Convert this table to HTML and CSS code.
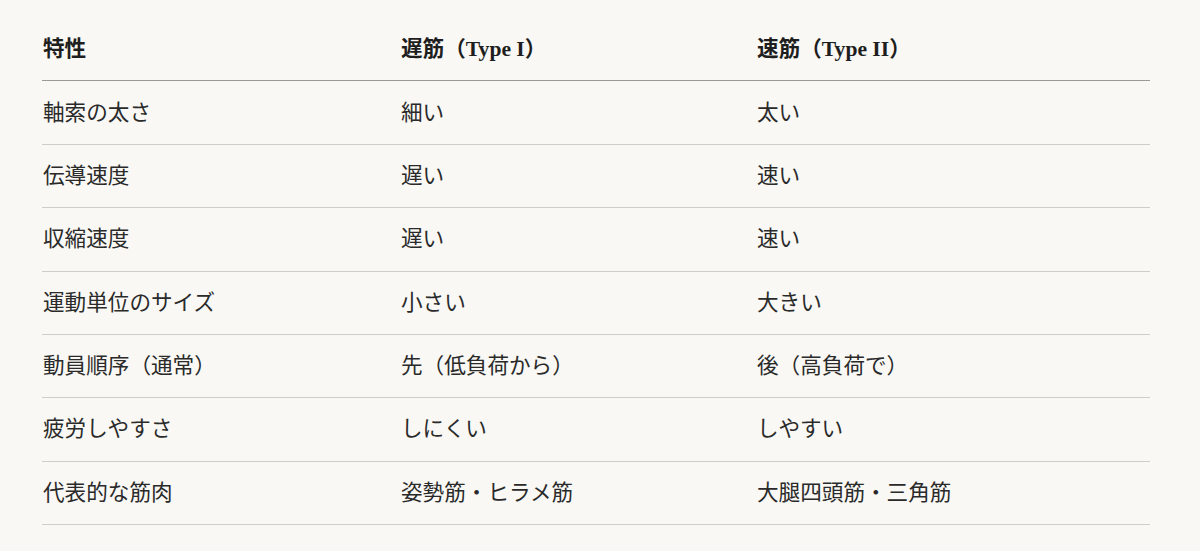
FILE: index.html
```html
<!DOCTYPE html>
<html lang="ja">
<head>
<meta charset="utf-8">
<link rel="stylesheet" href="styles.css">
</head>
<body>
<div class="wrap">
<table class="cmp">
<thead>
<tr><th class="c1">特性</th><th class="c2">遅筋（Type I）</th><th class="c3">速筋（Type II）</th></tr>
</thead>
<tbody>
<tr><td>軸索の太さ</td><td>細い</td><td>太い</td></tr>
<tr><td>伝導速度</td><td>遅い</td><td>速い</td></tr>
<tr><td>収縮速度</td><td>遅い</td><td>速い</td></tr>
<tr><td>運動単位のサイズ</td><td>小さい</td><td>大きい</td></tr>
<tr><td>動員順序（通常）</td><td>先（低負荷から）</td><td>後（高負荷で）</td></tr>
<tr><td>疲労しやすさ</td><td>しにくい</td><td>しやすい</td></tr>
<tr><td>代表的な筋肉</td><td>姿勢筋・ヒラメ筋</td><td>大腿四頭筋・三角筋</td></tr>
</tbody>
</table>
</div>
</body>
</html>
```

FILE: styles.css
```css
html, body {
  margin: 0;
  background: #f9f8f4;
}
body {
  font-family: "Liberation Serif", "Noto Sans CJK JP", serif;
  color: #2b2b2b;
}
.wrap {
  padding: 18px 0 0 42px;
}
.cmp {
  width: 1108px;
  border-collapse: collapse;
  table-layout: fixed;
  font-size: 21.6px;
}
.cmp th, .cmp td {
  text-align: left;
  padding: 14.2px 0 14.2px 1px;
  line-height: 34px;
  vertical-align: middle;
}
.cmp th {
  font-weight: 700;
  color: #1e1e1e;
  border-bottom: 1.5px solid #9c9a96;
}
.cmp td {
  font-weight: 400;
  color: #2a2a2a;
  border-bottom: 1px solid #cfcdc8;
}
.c1 { width: 357px; }
.c2 { width: 355px; }
.c3 { width: auto; }
```
